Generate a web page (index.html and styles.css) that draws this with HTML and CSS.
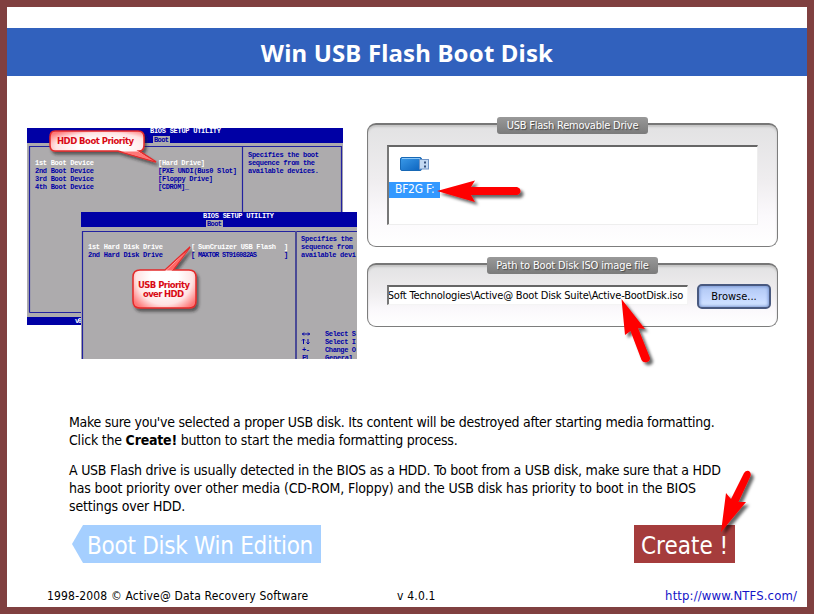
FILE: index.html
```html
<!DOCTYPE html>
<html lang="en">
<head>
<meta charset="utf-8">
<title>Win USB Flash Boot Disk</title>
<link rel="stylesheet" href="styles.css">
</head>
<body>
<div class="window">
  <h1 class="title"><span>Win USB Flash Boot Disk</span></h1>
  <main class="content">
    <svg class="bios" width="330" height="232" viewBox="27 127 330 232">
      <defs>
        <radialGradient id="glow" cx=".5" cy=".5" r=".62"><stop offset=".35" stop-color="#fff"/><stop offset=".72" stop-color="#ffe3e3"/><stop offset="1" stop-color="#f77"/></radialGradient>
        <filter id="soft" x="-20%" y="-20%" width="150%" height="160%"><feDropShadow dx="2" dy="3" stdDeviation="1.5" flood-color="#222" flood-opacity=".6"/></filter>
      </defs>
      <rect x="27" y="128" width="316" height="197" fill="#adabad"/>
      <rect x="27" y="128" width="316" height="15" fill="#0000a5"/>
      <rect x="27" y="317" width="54" height="8" fill="#0000a5"/>
      <path d="M29.500 312.500V146.500H341.500V212M242.500 146.500V212M29.500 312.500H81" fill="none" stroke="#2222a0" stroke-width="1.200"/>
      <rect x="153" y="136" width="17" height="7" fill="#adabad"/>
      <g class="mono">
        <text class="w" x="150" y="133" textLength="71">BIOS SETUP UTILITY</text>
        <text x="154" y="141.500" textLength="15">Boot</text>
        <text class="w" x="35" y="165" textLength="59">1st Boot Device</text>
        <text x="35" y="173" textLength="59">2nd Boot Device</text>
        <text x="35" y="181" textLength="59">3rd Boot Device</text>
        <text x="35" y="189" textLength="59">4th Boot Device</text>
        <text class="w" x="158" y="165" textLength="47">[Hard Drive]</text>
        <text x="158" y="173" textLength="79">[PXE UNDI(Bus0 Slot]</text>
        <text x="158" y="181" textLength="55">[Floppy Drive]</text>
        <text x="158" y="189" textLength="31">[CDROM]_</text>
        <text x="248" y="157" textLength="71">Specifies the boot</text>
        <text x="248" y="165" textLength="67">sequence from the</text>
        <text x="248" y="173" textLength="71">available devices.</text>
        <text class="w" x="75" y="323" textLength="7">v0</text>
      </g>
      <rect x="81" y="212" width="276" height="147" fill="#adabad"/>
      <rect x="81" y="212" width="276" height="15" fill="#0000a5"/>
      <path d="M82.500 359V231.500H357" fill="none" stroke="#2222a0" stroke-width="1.200"/>
      <path d="M296 231V359" stroke="#4a4a96" stroke-width="2"/>
      <rect x="206" y="220" width="17" height="7" fill="#adabad"/>
      <g class="mono">
        <text class="w" x="203" y="217.500" textLength="71">BIOS SETUP UTILITY</text>
        <text x="207" y="225.500" textLength="15">Boot</text>
        <text class="w" x="88" y="249" textLength="75">1st Hard Disk Drive</text>
        <text x="88" y="257" textLength="75">2nd Hard Disk Drive</text>
        <text class="w" x="191" y="248.500" textLength="3">[</text><text class="w" x="198" y="248.500" textLength="78">SunCruizer USB Flash</text><text class="w" x="284" y="248.500" textLength="3">]</text>
        <text x="191" y="256.500" textLength="3">[</text><text x="198" y="256.500" textLength="59">MAXTOR ST916082AS</text><text x="284" y="256.500" textLength="3">]</text>
        <text x="301" y="241" textLength="52">Specifies the</text>
        <text x="301" y="249" textLength="52">sequence from</text>
        <text x="301" y="257" textLength="55">available devi</text>
        <text x="325" y="336" textLength="31">Select S</text>
        <text x="325" y="344" textLength="31">Select I</text>
        <text x="302" y="352" textLength="8">+-</text><text x="325" y="352" textLength="31">Change O</text>
        <text x="302" y="359.500" textLength="7">F1</text><text x="325" y="359.500" textLength="28">General</text>
      </g>
      <path d="M302 334H310M304 332.500L302.500 334L304 335.500M308 332.500L309.500 334L308 335.500M303.500 344V339M302 340.500L303.500 339L305 340.500M308 339V344M306.500 342.500L308 344L309.500 342.500" fill="none" stroke="#0000a5"/>
      <g filter="url(#soft)">
        <path d="M55 131H138Q144 131 144 137V145Q144 151 139 151L156 162L118 151H55Q50 151 50 145V137Q50 131 55 131Z" fill="url(#glow)" stroke="#e42a2a" stroke-width="1.500"/>
        <path d="M121 151.500H138L154 161Z" fill="#f77"/>
      </g>
      <text class="tag" x="57" y="144" textLength="77">HDD Boot Priority</text>
      <g filter="url(#soft)">
        <path d="M140 270H165L190 247L173 270H189Q196 270 196 277V301Q196 308 189 308H140Q133 308 133 301V277Q133 270 140 270Z" fill="url(#glow)" stroke="#e42a2a" stroke-width="1.500"/>
        <path d="M166 270.500L188 250L172 270.500Z" fill="#f66"/>
      </g>
      <text class="tag" x="138" y="288" textLength="52">USB Priority</text>
      <text class="tag" x="143" y="297" textLength="41">over HDD</text>
    </svg>
    <div class="settings">
      <section class="panel drive">
        <h2 class="legend"><span class="l1">USB Flash Removable Drive</span></h2>
        <div class="list">
          <svg class="usb" width="30" height="16" viewBox="0 0 30 16">
            <defs><linearGradient id="body" x2="1" y2="1"><stop stop-color="#3b9bea"/><stop offset="1" stop-color="#0b62bd"/></linearGradient></defs>
            <rect x=".5" y="1.500" width="21" height="13" rx="1.500" fill="url(#body)" stroke="#1768b5"/>
            <path d="M2 2.500H20" stroke="#8cc8f8"/>
            <rect x="19.500" y="3.500" width="9" height="9.500" fill="#c3d9f2" stroke="#7095c6"/>
            <path d="M24 5.500h2v2h-2zM24 9.500h2v2h-2z" fill="#35507c"/>
          </svg>
          <div class="item"><span>BF2G F:</span></div>
        </div>
      </section>
      <section class="panel path">
        <h2 class="legend"><span class="l2">Path to Boot Disk ISO image file</span></h2>
        <div class="field"><span>Soft Technologies\Active@ Boot Disk Suite\Active-BootDisk.iso</span></div>
        <button class="browse"><span>Browse...</span></button>
      </section>
    </div>
  </main>
  <div class="notes">
    <p><span class="n1">Make sure you've selected a proper USB disk. Its content will be destroyed after starting media formatting.</span><br><span class="n2">Click the <b>Create!</b> button to start the media formatting process.</span></p>
    <p><span class="n3">A USB Flash drive is usually detected in the BIOS as a HDD. To boot from a USB disk, make sure that a HDD</span><br><span class="n4">has boot priority over other media (CD-ROM, Floppy) and the USB disk has priority to boot in the BIOS</span><br><span class="n5">settings over HDD.</span></p>
  </div>
  <div class="actions">
    <button class="back"><span>Boot Disk Win Edition</span></button>
    <button class="create"><span>Create !</span></button>
  </div>
  <footer class="footer"><span class="copy">1998-2008 © Active@ Data Recovery Software</span><span class="version">v 4.0.1</span><a class="link">http://www.NTFS.com/</a></footer>
</div>
<svg class="arrows" width="814" height="614" viewBox="0 0 814 614">
  <defs><filter id="cast" filterUnits="userSpaceOnUse" x="0" y="0" width="814" height="614"><feDropShadow dx="3" dy="3" stdDeviation="1.800" flood-color="#000" flood-opacity=".6"/></filter></defs>
  <g fill="#f00" filter="url(#cast)">
    <path d="M437 191L475 180.500L471 187L517 187Q520.500 188 520.500 191Q520.500 194 517 195L471 195L475 202Z"/>
    <path d="M621.500 299L645 329L638 328L650 358Q650 361 647 362Q643 363 641.500 360L630.500 331L625 335Z"/>
    <path d="M721 532L726 493L731 499L744 473Q746 470 749 471Q751.500 473 750.500 476L738.500 502L746 502Z"/>
  </g>
</svg>
</body>
</html>
```
FILE: styles.css
```css
* { box-sizing: border-box; }
body {
  margin: 0;
  width: 814px;
  height: 614px;
  overflow: hidden;
  position: relative;
  font-family: "DejaVu Sans Condensed", "DejaVu Sans", sans-serif;
  font-stretch: condensed;
  color: #000;
}
h1, h2, p { margin: 0; font-weight: normal; }
button { border: 0; padding: 0; font: inherit; text-align: left; }
span, a { white-space: nowrap; }
.window {
  width: 814px;
  height: 614px;
  border: 7px solid #804040;
  background: #fff;
  display: flex;
  flex-direction: column;
}
.title {
  margin-top: 21px;
  height: 48px;
  flex: none;
  background: #3161bd;
  color: #fff;
  font: bold 24px/49px "Noto Sans", sans-serif;
  letter-spacing: .16px;
  text-align: center;
}
.content {
  display: flex;
  flex: none;
  gap: 10px;
  height: 329px;
  padding: 47px 29px 0 20px;
}
.bios { flex: none; margin-top: 4px; }
.mono { font: bold 7px "Liberation Mono", monospace; fill: #0000a5; white-space: pre; }
.mono .w { fill: #fff; }
.tag { font: bold 8.500px "DejaVu Sans", sans-serif; fill: #d90a15; }
.settings { width: 411px; }
.panel {
  position: relative;
  border: 1px solid #7d7d7d;
  border-top: 2px solid #777;
  border-radius: 9px;
  background: linear-gradient(#e2e2e3, #efedef 45%, #fbf9fc 75%, #fff);
  box-shadow: inset 0 2px 2px #c4c4c4;
}
.drive { height: 124px; padding: 20px 19px; }
.path { height: 64px; margin-top: 16px; padding: 19px 6px 0 19px; display: flex; }
.legend {
  position: absolute;
  top: -8px;
  left: 129px;
  width: 151px;
  height: 17px;
  border-radius: 3px;
  background: linear-gradient(#999, #7b7b7b);
  color: #fff;
  font-size: 11px;
  line-height: 17px;
  text-align: center;
  text-shadow: 1px 1px 1px #444;
}
.l1 { letter-spacing: -.23px; }
.l2 { letter-spacing: -.15px; }
.path .legend { left: 119px; width: 171px; }
.list {
  height: 80px;
  width: 371px;
  border: 1px solid #eee;
  border-top: 2px solid #666;
  border-left: 2px solid #777;
  background: #fff;
  padding-top: 9px;
}
.usb { display: block; margin-left: 11px; }
.item {
  width: 51px;
  height: 16px;
  margin-top: 10px;
  padding-left: 6px;
  background: #3399ff;
  color: #fff;
  font-size: 12px;
  line-height: 15px;
  letter-spacing: -.25px;
}
.field {
  width: 301px;
  height: 20px;
  margin-top: 1px;
  border: 1px solid #f4f4f4;
  border-top: 2px solid #666;
  border-left: 2px solid #777;
  background: #fff;
  overflow: hidden;
  font-size: 11px;
  letter-spacing: -.19px;
  line-height: 17px;
  display: flex;
  justify-content: flex-end;
  padding-right: 4px;
}
.browse {
  width: 74px;
  height: 25px;
  margin-left: 9px;
  border: 2px solid #49597f;
  border-radius: 5px;
  background: linear-gradient(#b0c7f3, #c5d8ff 60%, #d5e6ff);
  box-shadow: inset 0 0 3px 1px #7d9ad5;
  font-size: 11px;
  text-align: center;
}
.notes { padding: 8px 0 0 62px; font-size: 14px; line-height: 18px; height: 120px; flex: none; }
.notes p + p { margin-top: 12px; }
.n1 { letter-spacing: -.275px; }
.n2 { letter-spacing: -.21px; }
.n3 { letter-spacing: -.24px; }
.n4 { letter-spacing: -.17px; }
.n5 { letter-spacing: -.17px; }
.actions {
  display: flex;
  flex: none;
  justify-content: space-between;
  height: 38px;
  padding: 0 72px 0 65px;
  font-size: 24px;
}
.back {
  width: 249px;
  height: 38px;
  padding: 3px 0 0 15px;
  background: #a5cfff;
  color: #fff;
  letter-spacing: -.28px;
  clip-path: polygon(0 50%, 11px 0, 100% 0, 100% 100%, 11px 100%);
}
.create { width: 101px; height: 38px; padding: 3px 0 0 7px; background: #a53c3c; color: #fff; }
.footer { display: flex; padding: 24px 10px 0 40px; font-size: 12px; line-height: 18px; }
.copy { width: 350px; letter-spacing: .17px; }
.version { letter-spacing: .2px; }
.link { margin-left: auto; color: #1414c8; font-size: 13px; letter-spacing: .12px; }
.arrows { position: absolute; left: 0; top: 0; pointer-events: none; }
```
